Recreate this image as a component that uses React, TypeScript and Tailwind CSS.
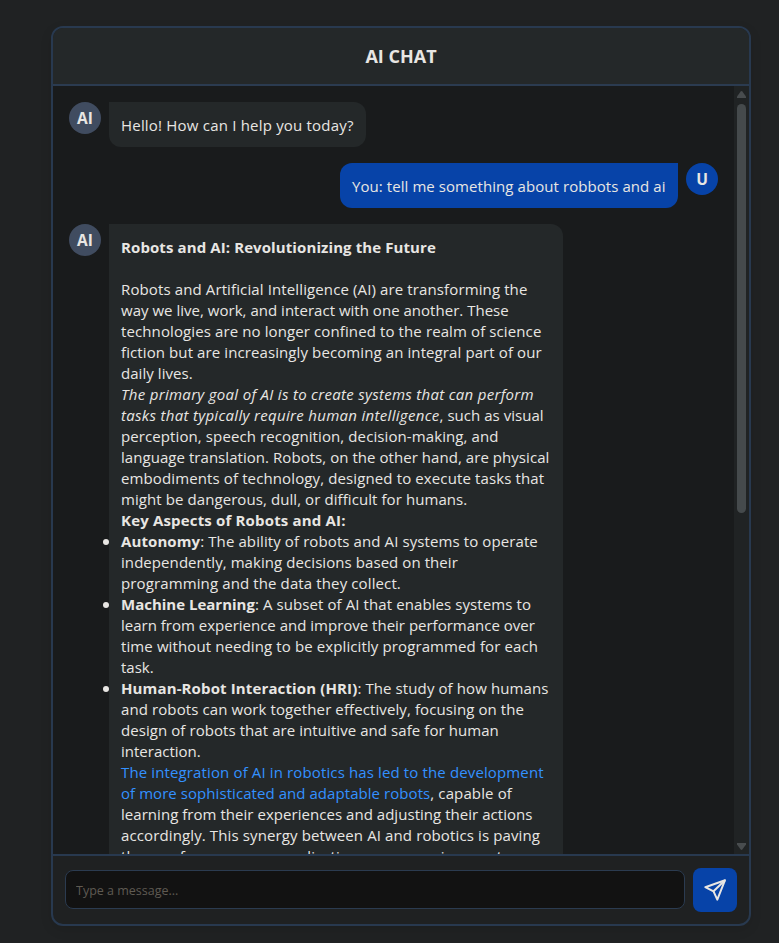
import type { ReactNode } from "react";

function Avatar({ label, user = false }: { label: string; user?: boolean }) {
  return (
    <div
      className={`flex h-8 w-8 shrink-0 items-center justify-center rounded-full pt-px text-[15.5px] font-bold ${
        user ? "bg-[#0743a8]" : "bg-[#404c60]"
      }`}
    >
      {label}
    </div>
  );
}

function Line({ children, className = "" }: { children?: ReactNode; className?: string }) {
  return <div className={`h-[21px] ${className}`}>{children}</div>;
}

function Item({ children }: { children: ReactNode }) {
  return (
    <li className="relative">
      <span className="absolute top-[8px] left-[-18px] h-1.5 w-1.5 rounded-full bg-[#e8e6e3]" />
      {children}
    </li>
  );
}

export default function App() {
  return (
    <div className="flex h-[943px] w-[779px] justify-center overflow-hidden bg-[#202223] pt-[26px] pl-[23px] font-['Open_Sans','Noto_Sans',sans-serif] text-[15px] leading-[21px] text-[#e8e6e3]">
      <div className="flex h-[900px] w-[700px] flex-col overflow-hidden rounded-xl border-2 border-[#28394f] bg-[#1f2122] shadow-[0_4px_12px_rgba(0,0,0,0.1)]">
        <header className="flex h-[58px] shrink-0 items-center justify-center border-b-2 border-[#2b3b50] bg-[#242829] text-[18px] font-bold">
          AI CHAT
        </header>

        <main className="flex min-h-0 flex-1 overflow-hidden bg-[#191b1c]">
          <div className="flex min-w-0 flex-1 flex-col gap-4 p-4 whitespace-nowrap">
            <div className="flex items-start gap-2">
              <Avatar label="AI" />
              <div className="w-[257px] rounded-xl rounded-tl-none bg-[#242829] px-3 pt-[13px] pb-[11px] tracking-[0.2px]">
                Hello! How can I help you today?
              </div>
            </div>

            <div className="flex items-start justify-end gap-2">
              <div className="w-[338px] rounded-xl rounded-tr-none bg-[#0743a8] px-3 pt-[13px] pb-[11px] tracking-[0.07px]">
                You: tell me something about robbots and ai
              </div>
              <Avatar label="U" user />
            </div>

            <div className="flex items-start gap-2">
              <Avatar label="AI" />
              <div className="w-[454px] rounded-xl rounded-tl-none bg-[#242829] px-3 pt-[13px] pb-[11px]">
                <Line className="mb-[21px] font-bold tracking-[0.1px]">Robots and AI: Revolutionizing the Future</Line>
                <Line className="tracking-[0.12px]">Robots and Artificial Intelligence (AI) are transforming the</Line>
                <Line className="tracking-[0.02px]">way we live, work, and interact with one another. These</Line>
                <Line className="tracking-[0.11px]">technologies are no longer confined to the realm of science</Line>
                <Line className="tracking-[0.1px]">fiction but are increasingly becoming an integral part of our</Line>
                <Line className="tracking-[0.05px]">daily lives.</Line>
                <Line className="tracking-[0.3px] italic">The primary goal of AI is to create systems that can perform</Line>
                <Line className="tracking-[0.03px]">
                  <em className="tracking-[0.31px]">tasks that typically require human intelligence</em>, such as visual
                </Line>
                <Line className="tracking-[0.1px]">perception, speech recognition, decision-making, and</Line>
                <Line className="tracking-[0.05px]">language translation. Robots, on the other hand, are physical</Line>
                <Line className="tracking-[0.12px]">embodiments of technology, designed to execute tasks that</Line>
                <Line className="tracking-[0.08px]">might be dangerous, dull, or difficult for humans.</Line>
                <Line className="font-bold tracking-[0.17px]">Key Aspects of Robots and AI:</Line>
                <ul>
                  <Item>
                    <Line className="tracking-[0.1px]">
                      <b>Autonomy</b>: The ability of robots and AI systems to operate
                    </Line>
                    <Line className="tracking-[0.07px]">independently, making decisions based on their</Line>
                    <Line className="tracking-[0.12px]">programming and the data they collect.</Line>
                  </Item>
                  <Item>
                    <Line className="tracking-[0.09px]">
                      <b className="tracking-normal">Machine Learning</b>: A subset of AI that enables systems to
                    </Line>
                    <Line>learn from experience and improve their performance over</Line>
                    <Line className="tracking-[0.11px]">time without needing to be explicitly programmed for each</Line>
                    <Line>task.</Line>
                  </Item>
                  <Item>
                    <Line className="tracking-[0.1px]">
                      <b className="tracking-[0.13px]">Human-Robot Interaction (HRI)</b>: The study of how humans
                    </Line>
                    <Line className="tracking-[0.1px]">and robots can work together effectively, focusing on the</Line>
                    <Line className="tracking-[0.07px]">design of robots that are intuitive and safe for human</Line>
                    <Line>interaction.</Line>
                  </Item>
                </ul>
                <Line className="tracking-[0.13px] text-[#3391ff]">The integration of AI in robotics has led to the development</Line>
                <Line className="tracking-[0.13px]">
                  <span className="tracking-[0.06px] text-[#3391ff]">of more sophisticated and adaptable robots</span>, capable of
                </Line>
                <Line className="tracking-[0.04px]">learning from their experiences and adjusting their actions</Line>
                <Line className="tracking-[0.12px]">accordingly. This synergy between AI and robotics is paving</Line>
                <Line className="tracking-[0.05px]">the way for numerous applications across various sectors,</Line>
              </div>
            </div>
          </div>

          <div className="flex w-[15px] shrink-0 flex-col items-center bg-[#202324] pt-[5px] pb-1">
            <svg className="h-[7px] w-[9px] shrink-0 fill-[#484c4e]" viewBox="0 0 9 7">
              <path d="M3.7.4Q4.5-.3 5.3.4L9 5.5V7H0V5.5Z" />
            </svg>
            <div className="mt-1.5 h-[409px] w-[9px] rounded-full bg-[#454a4c]" />
            <svg className="mt-auto h-[7px] w-[9px] shrink-0 fill-[#484c4e]" viewBox="0 0 9 7">
              <path d="M3.7 6.6Q4.5 7.3 5.3 6.6L9 1.5V0H0V1.5Z" />
            </svg>
          </div>
        </main>

        <footer className="flex h-[70px] shrink-0 items-start gap-2 border-t-2 border-[#28394f] px-3 pt-3">
          <input
            className="mt-0.5 h-[39px] min-w-0 flex-1 rounded-lg border border-[#2b3b50] bg-[#121212] px-2.5 pt-px text-[12.5px] outline-none placeholder:text-[#5f5a52] placeholder:opacity-100"
            placeholder="Type a message..."
          />
          <button aria-label="Send" className="flex h-11 w-11 items-center justify-center rounded-lg bg-[#0743a8]">
            <svg className="h-6 w-6 fill-none stroke-[#e8e6e3] stroke-2" viewBox="0 0 24 24" strokeLinejoin="round">
              <path d="M22 2.2 2.3 9.2 10.5 13.3 14.3 21.6Z" />
              <path d="M22 2.2 10.5 13.3" />
            </svg>
          </button>
        </footer>
      </div>
    </div>
  );
}
